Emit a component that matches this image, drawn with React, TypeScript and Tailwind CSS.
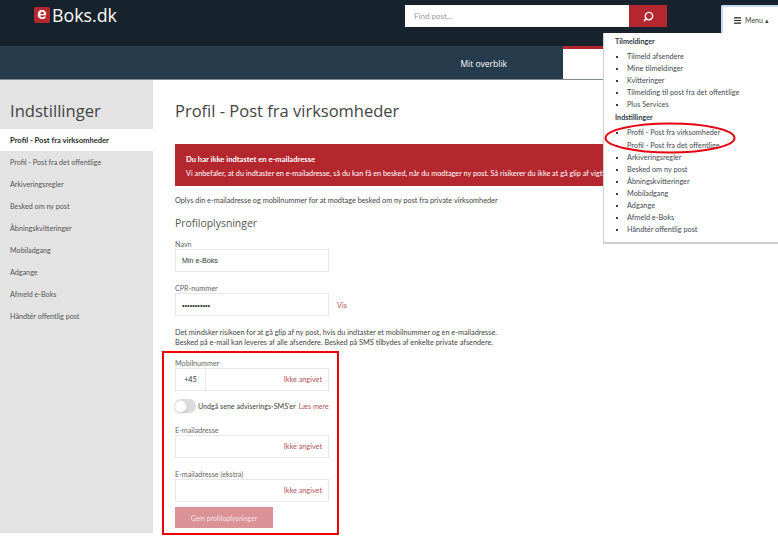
import { Menu, Search } from 'lucide-react';

const sideItems = [
  'Profil - Post fra det offentlige',
  'Arkiveringsregler',
  'Besked om ny post',
  'Åbningskvitteringer',
  'Mobiladgang',
  'Adgange',
  'Afmeld e-Boks',
  'Håndtér offentlig post',
];

const signups = [
  'Tilmeld afsendere',
  'Mine tilmeldinger',
  'Kvitteringer',
  'Tilmelding til post fra det offentlige',
  'Plus Services',
];

const settings = [
  'Profil - Post fra virksomheder',
  'Profil - Post fra det offentlige',
  'Arkiveringsregler',
  'Besked om ny post',
  'Åbningskvitteringer',
  'Mobiladgang',
  'Adgange',
  'Afmeld e-Boks',
  'Håndtér offentlig post',
];

function MenuList({ items }: { items: string[] }) {
  return (
    <ul className="list-disc pl-[12px] text-[7.3px] leading-[12.1px] text-[#3f4a52] marker:text-black">
      {items.map((item) => (
        <li key={item}>{item}</li>
      ))}
    </ul>
  );
}

function EmptyField({ label, className }: { label: string; className: string }) {
  return (
    <div className={className}>
      <div className="h-[12px] pt-[1px] text-[7.2px] leading-[12px] text-[#666]">{label}</div>
      <div className="-mt-[1px] flex h-[23px] w-[154px] items-center justify-end border border-[#e8e8e8] pr-[6px] pt-[2px] text-[7.3px] text-[#b5525a]">
        Ikke angivet
      </div>
    </div>
  );
}

export default function App() {
  return (
    <div className="relative h-[539px] w-[778px] overflow-hidden bg-white font-['Lato',sans-serif]">
      {/* Top bar */}
      <header className="flex h-[46px] items-start bg-[#16232d]">
        <div className="ml-[34px] mt-[7px] flex w-[83px] items-center">
          <span className="flex h-[16px] w-[16px] items-center justify-center rounded-[2px] bg-[#b5272f] font-['Liberation_Sans',sans-serif] text-[17px] font-bold leading-none text-white">
            <span className="-mt-[3px]">e</span>
          </span>
          <span className="ml-[2px] font-['Open_Sans',sans-serif] text-[17.8px] leading-[16px] text-white">Boks.dk</span>
        </div>
        <div className="ml-[288px] mt-[5px] flex h-[22px]">
          <div className="flex w-[224px] items-center bg-white pl-[9px] text-[8px] text-[#9a9a9a]">Find post...</div>
          <div className="flex w-[38px] items-center justify-center bg-[#b5272f]">
            <Search size={11} strokeWidth={3.2} className="-scale-x-100 text-white" />
          </div>
        </div>
      </header>

      {/* Tab bar */}
      <nav className="flex h-[34px] border-b border-[#7f8c95] bg-[#263b4b]">
        <div className="flex w-[563px] items-center justify-end pr-[56px] pt-[3px] font-['Open_Sans',sans-serif] text-[8.5px] text-white">Mit overblik</div>
        <div className="flex-1 border-t-[3px] border-[#b5272f] bg-white" />
      </nav>

      <div className="flex">
        {/* Sidebar */}
        <aside className="h-[453px] w-[153px] bg-[#e3e3e3]">
          <h2 className="pl-[10px] pt-[19px] font-['Open_Sans',sans-serif] text-[16.6px] leading-[24px] text-[#444]">Indstillinger</h2>
          <div className="mt-[6px] flex h-[22px] items-center bg-white pl-[10px] pt-[2px] text-[7.6px] font-bold text-[#2a2a2a]">
            Profil - Post fra virksomheder
          </div>
          {sideItems.map((item) => (
            <div key={item} className="flex h-[22px] items-center pl-[10px] pt-[2px] text-[7.2px] text-[#555]">
              {item}
            </div>
          ))}
        </aside>

        {/* Main content */}
        <main className="w-[625px] overflow-hidden pl-[22px]">
          <h1 className="pt-[19px] font-['Open_Sans',sans-serif] text-[16.5px] leading-[24px] text-[#444]">Profil - Post fra virksomheder</h1>
          <div className="mt-[21px] h-[42px] w-[600px] whitespace-nowrap bg-[#b5272f] pl-[11px] pt-[9px] text-[7.3px] leading-[13px] text-white">
            <div className="text-[7.6px] font-bold">Du har ikke indtastet en e-mailadresse</div>
            <div className="pt-[1px]">Vi anbefaler, at du indtaster en e-mailadresse, så du kan få en besked, når du modtager ny post. Så risikerer du ikke at gå glip af vigtig post.</div>
          </div>
          <p className="mt-[9px] text-[7.3px] leading-[12px] text-[#444]">
            Oplys din e-mailadresse og mobilnummer for at modtage besked om ny post fra private virksomheder
          </p>
          <h3 className="mt-[8px] font-['Open_Sans',sans-serif] text-[10.4px] leading-[16px] text-[#555]">Profiloplysninger</h3>

          <div className="mt-[7px] h-[12px] pt-[1px] text-[7.2px] leading-[12px] text-[#666]">Navn</div>
          <div className="-mt-[1px] flex h-[23px] w-[154px] items-center border border-[#e8e8e8] pl-[6px] pt-[2px] font-['Liberation_Sans',sans-serif] text-[7.2px] text-[#333]">
            Min e-Boks
          </div>

          <div className="mt-[10px] h-[12px] pt-[1px] text-[7.2px] leading-[12px] text-[#666]">CPR-nummer</div>
          <div className="-mt-[1px] flex items-center">
            <div className="flex h-[23px] w-[154px] items-center border border-[#e8e8e8] pl-[6px] pt-[3px] font-['Liberation_Sans',sans-serif] text-[7.3px] leading-none text-[#333]">
              •••••••••••
            </div>
            <span className="ml-[8px] mt-[3px] text-[7.3px] text-[#b5525a]">Vis</span>
          </div>

          <p className="mt-[12px] text-[7.3px] leading-[10px] text-[#444]">
            Det mindsker risikoen for at gå glip af ny post, hvis du indtaster et mobilnummer og en e-mailadresse.
            <br />
            Besked på e-mail kan leveres af alle afsendere. Besked på SMS tilbydes af enkelte private afsendere.
          </p>

          <div className="mt-[9px] h-[12px] pt-[1px] text-[7.2px] leading-[12px] text-[#666]">Mobilnummer</div>
          <div className="-mt-[1px] flex h-[23px] w-[154px] border border-[#e8e8e8] text-[7.3px]">
            <div className="flex w-[30px] items-center justify-center border-r border-[#e8e8e8] pt-[2px] text-[#333]">+45</div>
            <div className="flex flex-1 items-center justify-end pr-[6px] pt-[2px] text-[#b5525a]">Ikke angivet</div>
          </div>

          <div className="mt-[8px] flex h-[14px] items-center whitespace-nowrap text-[7.1px]">
            <div className="-ml-[1px] flex h-[14px] w-[22px] items-center rounded-full bg-[#dcdcdc]">
              <div className="h-[13px] w-[13px] rounded-full border border-[#e4e4e4] bg-white shadow-sm" />
            </div>
            <span className="ml-[2px] mt-[2px] text-[#444]">Undgå sene adviserings-SMS'er</span>
            <span className="ml-[3px] mt-[2px] text-[#b5525a]">Læs mere</span>
          </div>

          <EmptyField label="E-mailadresse" className="mt-[11px]" />
          <EmptyField label="E-mailadresse (ekstra)" className="mt-[10px]" />

          <div className="mt-[5px] flex h-[21px] w-[98px] items-center justify-center bg-[#da9296] pt-[2px] text-[6.9px] text-[#f6e4e5]">
            Gem profiloplysninger
          </div>
        </main>
      </div>

      {/* Dropdown menu */}
      <div className="absolute left-[721px] top-[5px] flex h-[28px] w-[57px] items-center rounded-tl-[2px] border-2 border-r-0 border-b-0 border-[#c9d8f2] bg-white pl-[10px] text-[7px] text-[#444]">
        <Menu size={9} strokeWidth={3} className="text-[#222]" />
        <span className="ml-[3px]">Menu ▴</span>
      </div>
      <div className="absolute left-[603px] top-[33px] h-[211px] w-[175px] border-b-2 border-l border-[#cfcfcf] bg-white pl-[11px] pt-[3px]">
        <div className="h-[11px] text-[7.2px] font-bold leading-[11px] text-[#2f3a44]">Tilmeldinger</div>
        <div className="mt-[4px]"><MenuList items={signups} /></div>
        <div className="mt-[1px] h-[11px] text-[7.2px] font-bold leading-[12px] text-[#2f3a44]">Indstillinger</div>
        <div className="mt-[4px]"><MenuList items={settings} /></div>
      </div>

      {/* Red annotations */}
      <div className="absolute left-[162px] top-[351px] h-[184px] w-[177px] border-2 border-[#f00000]" />
      <svg className="absolute left-[603px] top-[120px]" width="134" height="38" viewBox="0 0 134 38" fill="none">
        <ellipse cx="67" cy="18" rx="64.5" ry="14.5" stroke="#e6000f" strokeWidth="2" />
      </svg>
    </div>
  );
}
